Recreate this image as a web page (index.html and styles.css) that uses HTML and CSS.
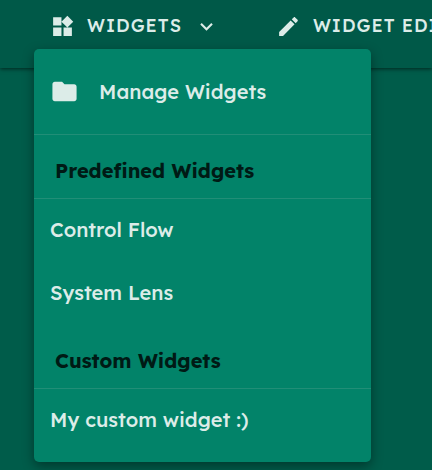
FILE: index.html
```
<!DOCTYPE html>
<html lang="en">
<head>
<meta charset="utf-8">
<meta name="viewport" content="width=device-width, initial-scale=1">
<title>Widgets</title>
<link rel="stylesheet" href="styles.css">
</head>
<body>
<header class="toolbar">
  <div class="dropdown">
    <button class="nav-button" type="button" aria-expanded="true" aria-controls="widgets-menu">
      <svg class="icon" viewBox="0 0 24 24" aria-hidden="true"><path d="M13 13v8h8v-8h-8zM3 21h8v-8H3v8zM3 3v8h8V3H3zm13.66-1.31L11 7.34 16.66 13l5.66-5.66-5.66-5.65z"/></svg>
      <span>WIDGETS</span>
      <svg class="icon chevron" viewBox="0 0 24 24" aria-hidden="true"><path d="M7.41 8.59 12 13.17l4.59-4.58L18 10l-6 6-6-6z"/></svg>
    </button>
    <nav class="menu" id="widgets-menu" aria-label="Widgets">
      <a class="menu-item manage" href="#manage">
        <svg class="icon folder" viewBox="0 0 24 24" aria-hidden="true"><path d="M10 4H4c-1.100 0-1.990.9-1.990 2L2 18c0 1.100.9 2 2 2h16c1.100 0 2-.9 2-2V8c0-1.100-.9-2-2-2h-8l-2-2z"/></svg>
        <span>Manage Widgets</span>
      </a>
      <h2 class="menu-heading">Predefined Widgets</h2>
      <a class="menu-item" href="#control-flow">Control Flow</a>
      <a class="menu-item" href="#system-lens">System Lens</a>
      <h2 class="menu-heading">Custom Widgets</h2>
      <a class="menu-item" href="#custom">My custom widget :)</a>
    </nav>
  </div>
  <button class="nav-button clipped" type="button">
    <svg class="icon" viewBox="0 0 24 24" aria-hidden="true"><path d="M3 17.250V21h3.750L17.810 9.940l-3.750-3.750L3 17.250zM20.710 7.040c.39-.39.39-1.020 0-1.410l-2.340-2.340c-.39-.39-1.020-.39-1.410 0l-1.830 1.830 3.750 3.750 1.830-1.830z"/></svg>
    <span>WIDGET EDITOR</span>
  </button>
</header>
</body>
</html>
```
FILE: styles.css
```
* {
  box-sizing: border-box;
}

body {
  margin: 0;
  min-height: 100vh;
  overflow: hidden;
  background: #005c4a;
  color: #dcece8;
  font-family: Lexend, Inter, "Liberation Sans", sans-serif;
}

.toolbar {
  display: flex;
  gap: 57px;
  height: 68px;
  padding-left: 50px;
  background: #005948;
  box-shadow: 0 1px 4px rgba(0, 0, 0, 0.6);
}

.dropdown {
  position: relative;
  flex: none;
}

.nav-button {
  display: flex;
  align-items: center;
  gap: 12px;
  height: 52px;
  padding: 0;
  border: 0;
  background: none;
  color: inherit;
  font: 500 18px/24px Lexend, Inter, "Liberation Sans", sans-serif;
  letter-spacing: 1px;
  white-space: nowrap;
}

.clipped {
  min-width: 0;
  overflow: hidden;
}

.icon {
  flex: none;
  width: 25px;
  height: 25px;
  fill: currentColor;
}

.menu {
  position: absolute;
  top: 49px;
  left: -16px;
  width: 337px;
  padding-bottom: 10px;
  border-radius: 5px;
  background: #028369;
  box-shadow: 0 4px 12px rgba(0, 0, 0, 0.4);
}

.menu-item {
  display: flex;
  align-items: center;
  height: 63px;
  padding: 0 16px 2px;
  color: inherit;
  font-size: 20px;
  font-weight: 500;
  line-height: 28px;
  text-decoration: none;
}

.manage {
  gap: 20px;
  height: 86px;
  padding-bottom: 0;
  border-bottom: 1px solid #218e77;
}

.folder {
  width: 29px;
  height: 29px;
}

.menu-heading {
  height: 64px;
  margin: 0;
  padding: 22px 21px 0;
  border-bottom: 1px solid #218e77;
  color: #001a15;
  font-size: 20px;
  font-weight: 700;
  line-height: 28px;
}
```
